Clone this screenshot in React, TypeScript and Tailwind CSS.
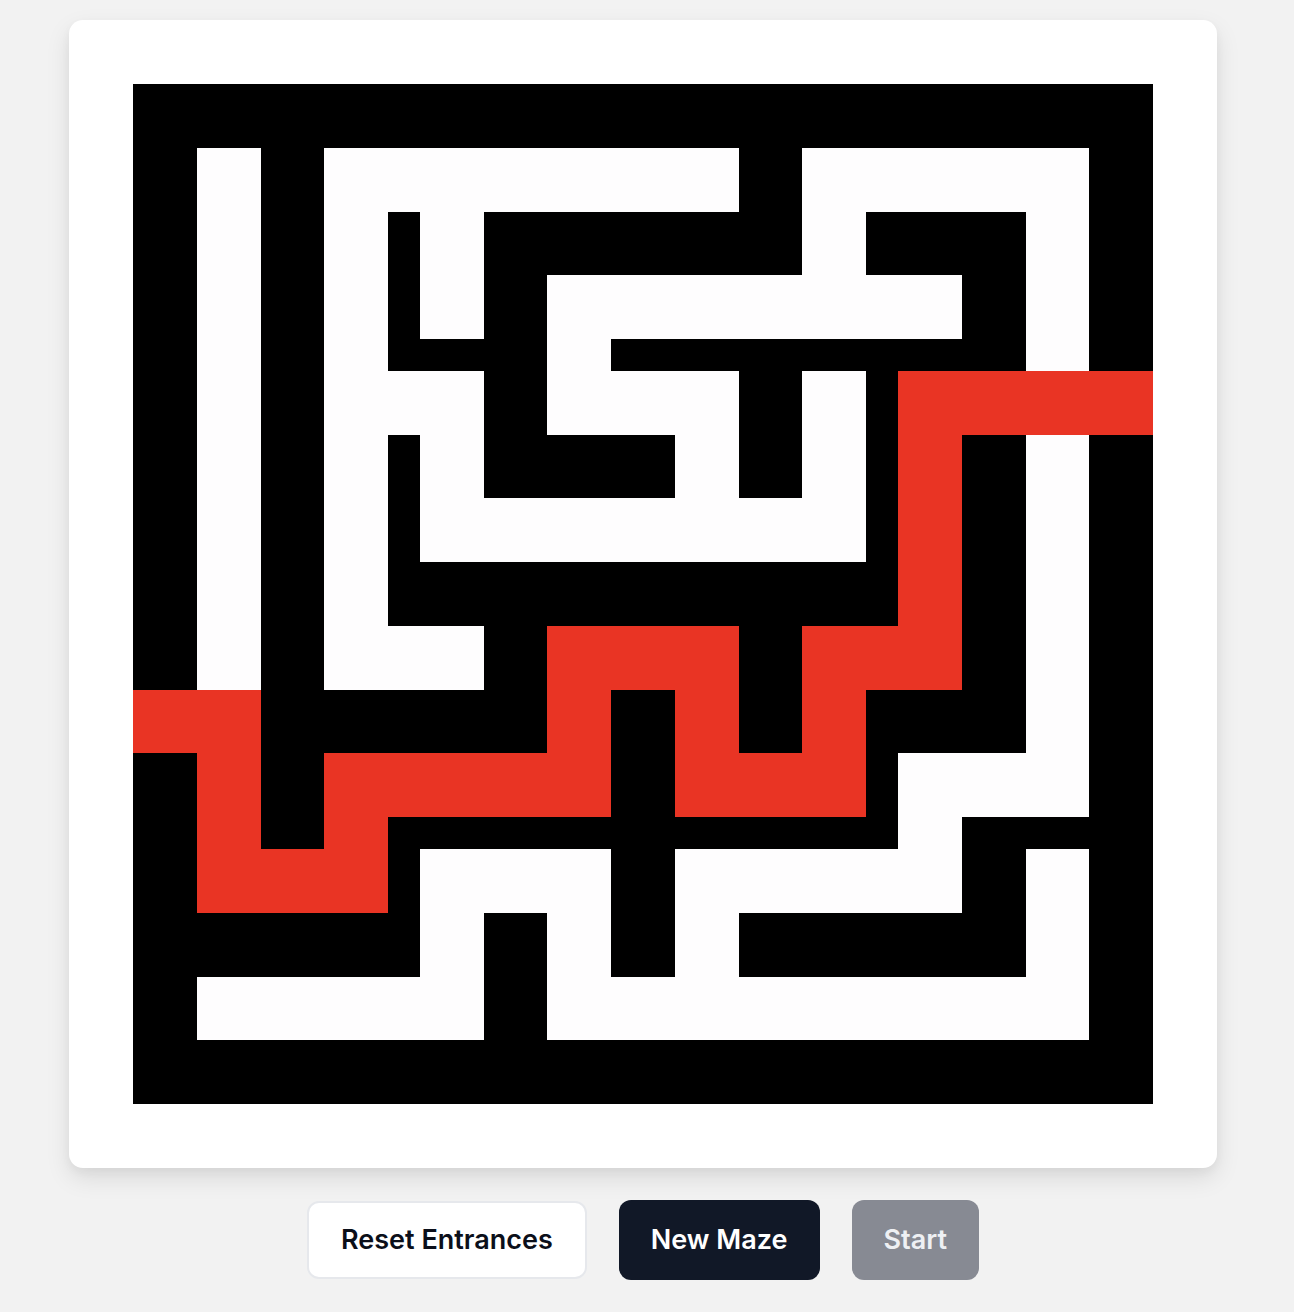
import React from "react";

const MAZE: string[] = [
  "################################",
  "################################",
  "##..##.............##.........##",
  "##..##.............##.........##",
  "##..##..#..##########..#####..##",
  "##..##..#..##########..#####..##",
  "##..##..#..##.............##..##",
  "##..##..#..##.............##..##",
  "##..##..#####..#############..##",
  "##..##.....##......##..#RRRRRRRR",
  "##..##.....##......##..#RRRRRRRR",
  "##..##..#..######..##..#RR##..##",
  "##..##..#..######..##..#RR##..##",
  "##..##..#..............#RR##..##",
  "##..##..#..............#RR##..##",
  "##..##..################RR##..##",
  "##..##..################RR##..##",
  "##..##.....##RRRRRR##RRRRR##..##",
  "##..##.....##RRRRRR##RRRRR##..##",
  "RRRR#########RR##RR##RR#####..##",
  "RRRR#########RR##RR##RR#####..##",
  "##RR##RRRRRRRRR##RRRRRR#......##",
  "##RR##RRRRRRRRR##RRRRRR#......##",
  "##RR##RR################..######",
  "##RRRRRR#......##.........##..##",
  "##RRRRRR#......##.........##..##",
  "#########..##..##..#########..##",
  "#########..##..##..#########..##",
  "##.........##.................##",
  "##.........##.................##",
  "################################",
  "################################",
];

function cellClass(c: string) {
  if (c === "#") return "bg-black";
  if (c === "R") return "bg-[#e93424]";
  return "bg-[#fefdfe]";
}

export default function App() {
  return (
    <div className="min-h-screen bg-[#f2f2f2] font-['Inter',sans-serif]">
      <div className="w-[1286px] flex flex-col items-center pt-5">
        <div className="bg-white rounded-[14px] p-16 shadow-[0_10px_25px_rgba(0,0,0,0.10),0_4px_10px_rgba(0,0,0,0.04)]">
          <div className="grid grid-cols-[repeat(32,1fr)] grid-rows-[repeat(32,1fr)] w-[1020px] h-[1020px]">
            {MAZE.map((row, r) =>
              row.split("").map((c, i) => (
                <div key={`${r}-${i}`} className={cellClass(c)} />
              ))
            )}
          </div>
        </div>
        <div className="mt-8 flex items-center gap-8">
          <button className="h-[78px] px-8 rounded-xl bg-white border-2 border-[#e6e8ec] text-[27px] font-semibold text-[#0b0f1a]">
            Reset Entrances
          </button>
          <button className="h-[80px] px-8 rounded-xl bg-[#111827] text-[27px] font-semibold text-white">
            New Maze
          </button>
          <button className="h-[80px] px-8 rounded-xl bg-[#878a93] text-[27px] font-semibold text-[#eef0f3]">
            Start
          </button>
        </div>
      </div>
    </div>
  );
}
